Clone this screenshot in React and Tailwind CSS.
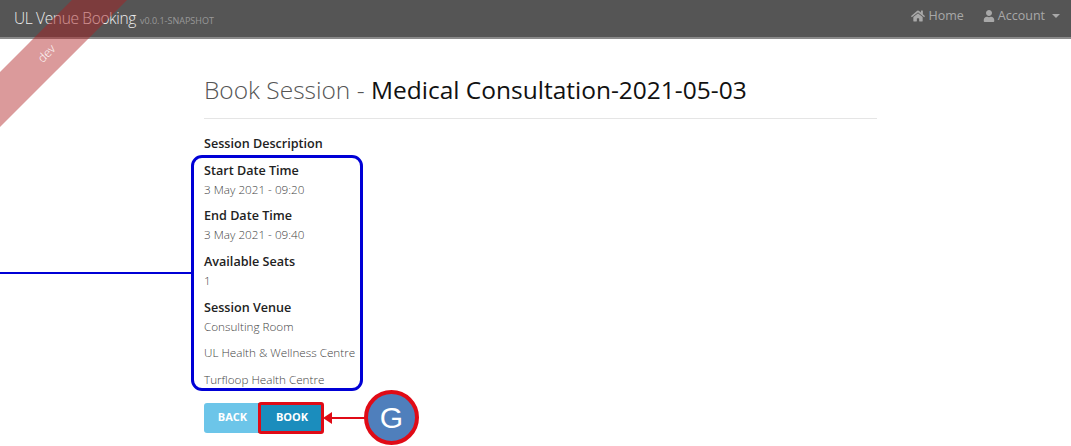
import React from "react";
import { FaHome, FaUser } from "react-icons/fa";

function Field({ label, values }) {
  return (
    <div className="mb-[6px]">
      <div className="h-[20px] text-[12.6px] leading-[22px] font-semibold text-[#222]">{label}</div>
      {values.map((v, i) => (
        <div key={v} className={`h-[20px] text-[11.7px] leading-[18px] font-light text-[#444] ${i > 0 ? "mt-[6.5px]" : ""}`}>{v}</div>
      ))}
    </div>
  );
}

export default function App() {
  return (
    <div className="relative h-[446px] w-[1071px] overflow-hidden bg-white font-['Open_Sans',sans-serif]">
      <header className="flex h-[39px] items-center justify-between border-b-2 border-[#8a8a8a] bg-[#555555] pl-[14px] pr-[11px]">
        <div className="flex items-baseline gap-[4px]">
          <span className="text-[15.5px] font-light tracking-[-0.35px] text-[#eeeeee]">UL Venue Booking</span>
          <span className="text-[9px] text-[#999999]">v0.0.1-SNAPSHOT</span>
        </div>
        <nav className="mb-[5px] flex items-center text-[12.5px] text-[#a8a8a8]">
          <FaHome className="mr-[3px] h-[14px] w-[14px]" />
          <span>Home</span>
          <FaUser className="ml-[19px] mr-[3px] h-[12px] w-[12px]" />
          <span>Account</span>
          <span className="ml-[7px] h-0 w-0 border-x-[4px] border-t-[4px] border-x-transparent border-t-[#a8a8a8]" />
        </nav>
      </header>

      <main className="ml-[204px] w-[673px]">
        <h1 className="mt-[33px] h-[47px] border-b border-[#e5e5e5] text-[24.5px] leading-[36px] font-light text-[#555]">
          Book Session - <span className="font-normal text-[#111]">Medical Consultation-2021-05-03</span>
        </h1>
        <div className="mt-[14px] h-[20px] text-[12.6px] leading-[22px] font-semibold text-[#222]">Session Description</div>
        <div className="mt-[6.5px]">
          <Field label="Start Date Time" values={["3 May 2021 - 09:20"]} />
          <div className="-mt-[1px]"><Field label="End Date Time" values={["3 May 2021 - 09:40"]} /></div>
          <Field label="Available Seats" values={["1"]} />
          <Field label="Session Venue" values={["Consulting Room", "UL Health & Wellness Centre", "Turfloop Health Centre"]} />
        </div>
        <div className="mt-[13px] flex">
          <button className="h-[30px] w-[54px] rounded-l-[3px] bg-[#6cc5e9] pl-[3px] text-[11px] font-bold text-white">BACK</button>
          <button className="h-[30px] w-[65px] rounded-r-[3px] bg-[#1b8dbd] pl-[3px] text-[11px] font-bold text-white">BOOK</button>
        </div>
      </main>

      {/* dev ribbon */}
      <div className="absolute left-[-51px] top-[21px] flex h-[39px] w-[220px] -rotate-45 items-center justify-center bg-[#b01e22]/45 pr-[36px] text-[12px] font-light text-white">
        dev
      </div>

      {/* annotations */}
      <div className="absolute left-[191px] top-[155px] h-[236px] w-[172px] rounded-[11px] border-[3px] border-[#0000d6]" />
      <div className="absolute left-0 top-[272px] h-[2px] w-[191px] bg-[#0000d6]" />
      <div className="absolute left-[258px] top-[402px] h-[32px] w-[66px] rounded-[3px] border-[3px] border-[#e00b16]" />
      <div className="absolute left-[331px] top-[417px] h-[2px] w-[34px] bg-[#e00b16]" />
      <div className="absolute left-[323px] top-[412px] h-0 w-0 border-y-[6px] border-r-[9px] border-y-transparent border-r-[#e00b16]" />
      <div className="absolute left-[364px] top-[390px] flex h-[55px] w-[55px] items-center justify-center rounded-full border-[4px] border-[#e00b16] bg-[#4f7fbc] font-['Liberation_Sans',sans-serif] text-[30px] text-white">
        G
      </div>
    </div>
  );
}
